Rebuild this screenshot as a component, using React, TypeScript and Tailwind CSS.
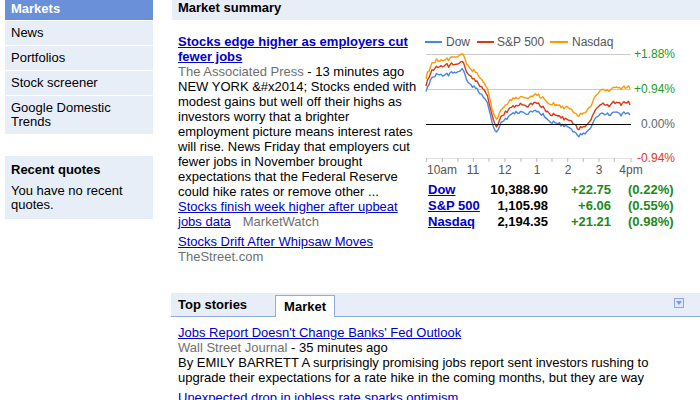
import React from "react";

type Pt = [number, number];

// linear interpolation over key points
function lerp(keys: Pt[], x: number) {
  for (let i = 1; i < keys.length; i++) {
    const [x0, y0] = keys[i - 1];
    const [x1, y1] = keys[i];
    if (x <= x1) return y0 + ((y1 - y0) * (x - x0)) / (x1 - x0);
  }
  return keys[keys.length - 1][1];
}

function rng(seed: number) {
  let s = seed;
  return () => {
    s = (s * 16807) % 2147483647;
    return s / 2147483647;
  };
}

const nasdaqKeys: Pt[] = [
  [426, 80], [430, 68], [436, 58], [442, 57], [448, 60], [455, 58], [462, 56],
  [466, 62], [470, 70], [476, 72], [482, 78], [487, 88], [492, 105], [496, 118],
  [499, 112], [503, 105], [510, 102], [518, 98], [526, 98], [534, 94], [542, 98],
  [550, 102], [558, 104], [566, 108], [572, 112], [578, 116], [582, 112], [588, 108],
  [594, 100], [600, 95], [606, 92], [612, 88], [618, 90], [624, 88], [631, 88],
];
const spOffset: Pt[] = [[426, 7], [445, 6], [470, 8], [500, 7], [530, 8], [580, 13], [631, 16]];
const dowOffset: Pt[] = [[426, 14], [445, 15], [470, 16], [500, 13], [530, 16], [580, 20], [631, 27]];

function buildLines() {
  const r = rng(12345);
  let shared = 0;
  const o: string[] = [];
  const s: string[] = [];
  const d: string[] = [];
  for (let x = 426; x <= 631; x += 1.5) {
    shared = shared * 0.55 + (r() - 0.5) * 4.2;
    const base = lerp(nasdaqKeys, x) + shared;
    const yo = base + (r() - 0.5) * 1.4;
    const ys = base + lerp(spOffset, x) + (r() - 0.5) * 1.6;
    const yd = base + lerp(dowOffset, x) + (r() - 0.5) * 1.6;
    o.push(`${x.toFixed(1)},${yo.toFixed(1)}`);
    s.push(`${x.toFixed(1)},${ys.toFixed(1)}`);
    d.push(`${x.toFixed(1)},${yd.toFixed(1)}`);
  }
  return { nasdaq: o.join(" "), sp: s.join(" "), dow: d.join(" ") };
}

const lines = buildLines();

const ticks = [426.7, 442.3, 458, 473.3, 489, 505, 521, 536.7, 552, 567.7, 583.3, 599, 614.3, 631];
const hours: [string, number][] = [["10am", 442], ["11", 473], ["12", 505], ["1", 537], ["2", 568], ["3", 599], ["4pm", 631]];

function Chart() {
  return (
    <svg width="282" height="150" viewBox="418 28 282 150" className="block" style={{ fontFamily: '"Liberation Sans", Arial, sans-serif' }}>
      {/* legend */}
      <line x1="425" y1="42" x2="442" y2="42" stroke="#4684ee" strokeWidth="2" />
      <text x="446" y="46" fontSize="12" fill="#555">Dow</text>
      <line x1="477" y1="42" x2="494" y2="42" stroke="#dc3912" strokeWidth="2" />
      <text x="497" y="46" fontSize="12" fill="#555">S&amp;P 500</text>
      <line x1="550" y1="42" x2="568" y2="42" stroke="#ff9900" strokeWidth="2" />
      <text x="572" y="46" fontSize="12" fill="#555">Nasdaq</text>

      {/* grid */}
      <line x1="426" y1="54.5" x2="631" y2="54.5" stroke="#cccccc" />
      <line x1="426" y1="89.5" x2="631" y2="89.5" stroke="#cccccc" />
      <line x1="426" y1="158.5" x2="631" y2="158.5" stroke="#e4e4e4" />
      {ticks.map((t) => (
        <line key={t} x1={t} y1="158" x2={t} y2="162" stroke="#bbbbbb" />
      ))}

      <polyline points={lines.dow} fill="none" stroke="#4684ee" strokeWidth="1.4" strokeLinejoin="round" />
      <polyline points={lines.sp} fill="none" stroke="#dc3912" strokeWidth="1.4" strokeLinejoin="round" />
      <polyline points={lines.nasdaq} fill="none" stroke="#ff9900" strokeWidth="1.4" strokeLinejoin="round" />
      <line x1="426" y1="124.5" x2="631" y2="124.5" stroke="#000" />

      {/* right labels */}
      <text x="675" y="58" fontSize="12" fill="#229a22" textAnchor="end">+1.88%</text>
      <text x="675" y="93" fontSize="12" fill="#229a22" textAnchor="end">+0.94%</text>
      <text x="675" y="128" fontSize="12" fill="#666" textAnchor="end">0.00%</text>
      <text x="675" y="162" fontSize="12" fill="#dc3912" textAnchor="end">-0.94%</text>

      {hours.map(([h, x]) => (
        <text key={h} x={x} y="174" fontSize="12" fill="#555" textAnchor="middle">{h}</text>
      ))}
    </svg>
  );
}

const quotes = [
  { name: "Dow", value: "10,388.90", change: "+22.75", pct: "(0.22%)" },
  { name: "S&P 500", value: "1,105.98", change: "+6.06", pct: "(0.55%)" },
  { name: "Nasdaq", value: "2,194.35", change: "+21.21", pct: "(0.98%)" },
];

export default function App() {
  return (
    <div
      className="w-[700px] h-[400px] overflow-hidden bg-white text-[13px] text-black flex"
      style={{ fontFamily: '"Liberation Sans", Arial, Helvetica, sans-serif' }}
    >
      {/* sidebar */}
      <div className="w-[148px] ml-[5px] shrink-0">
        <div className="bg-[#e8eef8]">
          <div className="h-[20px] bg-[#6b90da] pt-[1px] pl-[6px] leading-[15px] font-bold text-white">Markets</div>
          <div className="border-t border-white h-[25px] pl-[6px] pt-[4px] leading-[16px]">News</div>
          <div className="border-t border-white h-[25px] pl-[6px] pt-[4px] leading-[16px]">Portfolios</div>
          <div className="border-t border-white h-[25px] pl-[6px] pt-[4px] leading-[16px]">Stock screener</div>
          <div className="border-t border-white pl-[6px] pt-[5px] pb-[5px] leading-[14px]">
            Google Domestic
            <br />
            Trends
          </div>
        </div>
        <div className="mt-[22px] bg-[#e8eef8] px-[6px] pt-[7px] pb-[7px] leading-[14px]">
          <div className="font-bold">Recent quotes</div>
          <div className="mt-[7px]">
            You have no recent
            <br />
            quotes.
          </div>
        </div>
      </div>

      {/* main */}
      <div className="ml-[19px] flex-1 min-w-0">
        <div className="h-[20px] bg-[#e8eef8] pl-[6px] leading-[15px] font-bold">Market summary</div>

        <div className="flex">
          <div className="w-[246px] shrink-0 pl-[6px] pt-[14px] leading-[15px]">
            <a href="#" className="font-bold text-[#0000cc] underline">
              Stocks edge higher as employers cut fewer jobs
            </a>
            <div>
              <span className="text-[#6f6f6f]">The Associated Press</span> - 13 minutes ago
            </div>
            <div>
              NEW YORK &amp;#x2014; Stocks ended with modest gains but well off their highs as investors worry that a
              brighter employment picture means interest rates will rise. News Friday that employers cut fewer jobs in
              November brought expectations that the Federal Reserve could hike rates or remove other ...
            </div>
            <div>
              <a href="#" className="text-[#0000cc] underline">Stocks finish week higher after upbeat jobs data</a>
              <span className="pl-[12px] text-[#6f6f6f]">MarketWatch</span>
            </div>
            <div className="mt-[5px]">
              <a href="#" className="text-[#0000cc] underline">Stocks Drift After Whipsaw Moves</a>
              <div className="text-[#6f6f6f]">TheStreet.com</div>
            </div>
          </div>

          <div className="flex-1 pt-[8px]">
            <Chart />
            <div className="mt-[4px] pl-[10px] grid grid-cols-[60px_60px_63px_auto] font-bold leading-[16px]">
              {quotes.map((q) => (
                <React.Fragment key={q.name}>
                  <a href="#" className="text-[#0000cc] underline whitespace-nowrap">{q.name}</a>
                  <div className="text-right">{q.value}</div>
                  <div className="text-right text-[#228822]">{q.change}</div>
                  <div className="pl-[17px] text-[#228822]">{q.pct}</div>
                </React.Fragment>
              ))}
            </div>
          </div>
        </div>

        {/* tabs */}
        <div className="mt-[29px] -ml-[1px] h-[24px] bg-[#e8eef8] border-b border-[#8fa9e3] flex items-end">
          <div className="pl-[7px] pr-[28px] h-[23px] leading-[23px] font-bold">Top stories</div>
          <div className="h-[22px] -mb-[1px] px-[8px] bg-white border border-b-0 border-[#8fa9e3] leading-[21px] font-bold">
            Market
          </div>
          <div className="ml-auto mr-[16px] mb-[8px] w-[10px] h-[10px] border border-[#8fa9e3] bg-[#dfe8fa] flex items-center justify-center">
            <div className="w-0 h-0 border-l-[3px] border-r-[3px] border-t-[4px] border-l-transparent border-r-transparent border-t-[#7d9be0]" />
          </div>
        </div>

        <div className="pl-[6px] pr-[30px] pt-[8px] leading-[15px]">
          <a href="#" className="text-[#0000cc] underline">Jobs Report Doesn't Change Banks' Fed Outlook</a>
          <div>
            <span className="text-[#6f6f6f]">Wall Street Journal</span> - 35 minutes ago
          </div>
          <div>
            By EMILY BARRETT A surprisingly promising jobs report sent investors rushing to upgrade their expectations
            for a rate hike in the coming months, but they are way
          </div>
          <div className="mt-[5px]">
            <a href="#" className="text-[#0000cc] underline">Unexpected drop in jobless rate sparks optimism</a>
          </div>
        </div>
      </div>
    </div>
  );
}
